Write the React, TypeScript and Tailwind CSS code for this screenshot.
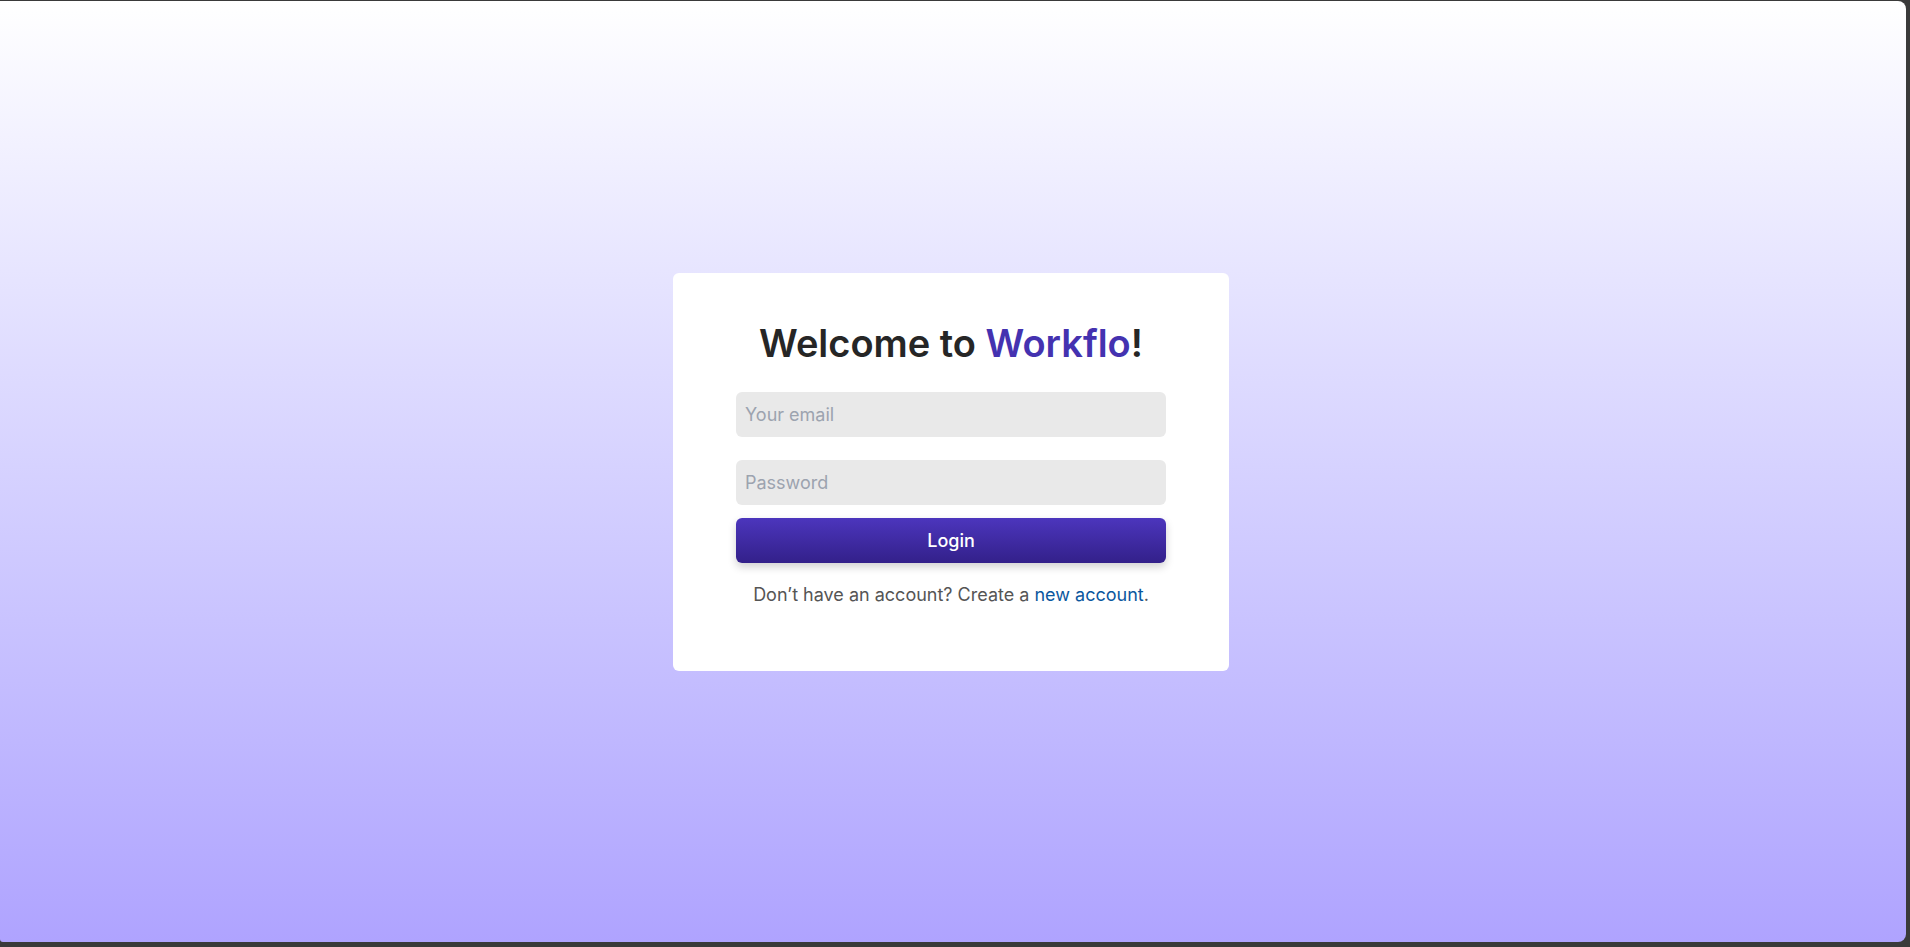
import React from "react";

export default function App() {
  return (
    <div className="h-screen w-full bg-[#3a3a3a] pt-px pr-1 pb-[5px] font-['Inter',sans-serif]">
      <div className="flex h-full w-full items-center justify-center rounded-tr-[8px] rounded-br-[8px] rounded-bl-[3px] bg-gradient-to-b from-white to-[#afa3ff] pr-[4px]">
        <div className="flex w-[556px] flex-col items-center rounded-[6px] bg-white pt-[50px] pb-[62px]">
          <h1 className="text-[38px] leading-[40px] font-semibold text-[#262626]">
            Welcome to <span className="text-[#4432b0]">Workflo</span>!
          </h1>
          <form className="mt-[29px] flex w-[430px] flex-col" onSubmit={(e) => e.preventDefault()}>
            <input
              type="email"
              placeholder="Your email"
              className="h-[45px] w-full rounded-[6px] bg-[#e9e9e9] px-[9px] text-[18px] text-[#333] outline-none placeholder:text-[#9ca3af]"
            />
            <input
              type="password"
              placeholder="Password"
              className="mt-[23px] h-[45px] w-full rounded-[6px] bg-[#e9e9e9] px-[9px] text-[18px] text-[#333] outline-none placeholder:text-[#9ca3af]"
            />
            <button
              type="submit"
              className="mt-[13px] h-[45px] w-full rounded-[6px] bg-gradient-to-b from-[#4c36bd] to-[#33208a] text-[18px] font-medium text-white shadow-[0_4px_8px_rgba(0,0,0,0.18)]"
            >
              Login
            </button>
          </form>
          <p className="mt-[18px] text-[18px] leading-[28px] text-[#555]">
            Don&rsquo;t have an account? Create a{" "}
            <a href="#" className="text-[#0b579e]">
              new account
            </a>
            .
          </p>
        </div>
      </div>
    </div>
  );
}
